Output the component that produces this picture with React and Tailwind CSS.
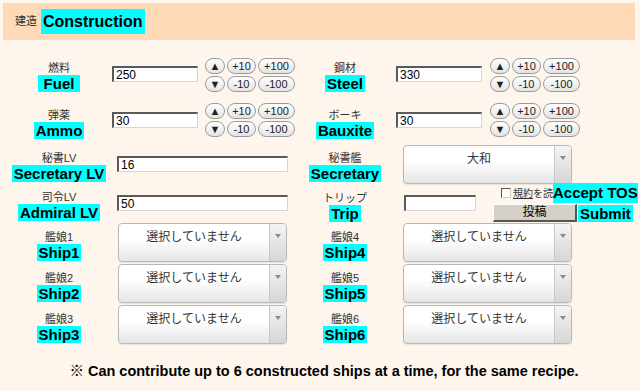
import React from 'react';

function Label({jp, en, cls, enCls}){
  return (
    <div className={"flex flex-col items-center shrink-0 " + cls}>
      <span className="text-[11px] leading-[14px] text-[#333]">{jp}</span>
      <span className={"bg-[#00ffff] text-[15px] leading-[17px] font-bold text-black " + (enCls || "px-[2px]")}>{en}</span>
    </div>
  );
}

function Steps({cls}){
  const b = "h-[16px] rounded-full border border-[#9a9a9a] bg-linear-to-b from-white to-[#e4e4e4] text-[11px] leading-[14px] text-[#222] flex items-center justify-center";
  return (
    <div className={"flex flex-col gap-[2px] mt-[1px] shrink-0 " + cls}>
      <div className="flex gap-[2px]">
        <span className={b + " w-[20px] text-[9px]"}>▲</span>
        <span className={b + " w-[29px]"}>+10</span>
        <span className={b + " w-[37px]"}>+100</span>
      </div>
      <div className="flex gap-[2px]">
        <span className={b + " w-[20px] text-[9px]"}>▼</span>
        <span className={b + " w-[29px]"}>-10</span>
        <span className={b + " w-[37px]"}>-100</span>
      </div>
    </div>
  );
}

function Field({value, cls}){
  return (
    <input readOnly defaultValue={value}
      className={"h-[16px] shrink-0 bg-white text-[12px] leading-[12px] pl-[2px] text-black outline-none border-t-2 border-l-2 border-b border-r border-t-[#5a5a5a] border-l-[#5a5a5a] border-b-[#d6d6d6] border-r-[#d6d6d6] " + cls} />
  );
}

function Sel({text, cls}){
  return (
    <div className={"w-[169px] h-[39px] shrink-0 flex rounded-[4px] border border-[#b8b8b8] bg-linear-to-b from-white from-40% to-[#e6e6e6] overflow-hidden shadow-[0_1px_1px_rgba(0,0,0,0.08)] " + cls}>
      <div className="flex-1 text-center pt-[6px] text-[12px] leading-[14px] text-[#333]">{text}</div>
      <div className="w-[17px] border-l border-[#c8c8c8] bg-linear-to-b from-[#f4f4f4] to-[#d6d6d6] flex justify-center pt-[10px]">
        <svg width="6" height="4" viewBox="0 0 6 4"><path d="M0 0h6L3 4z" fill="#8a8a8a" /></svg>
      </div>
    </div>
  );
}

export default function App(){
  const ships = [["艦娘1","Ship1","艦娘4","Ship4"],["艦娘2","Ship2","艦娘5","Ship5"],["艦娘3","Ship3","艦娘6","Ship6"]];
  return (
    <div className="w-[640px] h-[391px] bg-[#fef5ec] font-['Liberation_Sans','Noto_Sans_CJK_JP',sans-serif] overflow-hidden pt-[3px]">
      <div className="ml-[3px] mr-[5px] h-[37px] bg-[#fedab8] flex items-center pl-[12px]">
        <span className="text-[11px] text-[#333]">建造</span>
        <span className="ml-[4px] bg-[#00ffff] px-[2px] h-[25px] flex items-center text-[16px] font-bold text-black">Construction</span>
      </div>

      <div className="pl-[8px] mt-[17px]">
        <div className="flex items-start h-[45px]">
          <Label jp="燃料" en="Fuel" cls="w-[102px] mt-[4px]" enCls="px-[6px]" />
          <Field value="250" cls="ml-[2px] w-[86px] mt-[9px]" />
          <Steps cls="ml-[7px]" />
          <Label jp="鋼材" en="Steel" cls="w-[100px] mt-[4px]" />
          <Field value="330" cls="ml-[1px] w-[86px] mt-[9px]" />
          <Steps cls="ml-[8px]" />
        </div>
        <div className="flex items-start h-[43px]">
          <Label jp="弾薬" en="Ammo" cls="w-[102px] mt-[6px]" />
          <Field value="30" cls="ml-[2px] w-[86px] mt-[10px]" />
          <Steps cls="ml-[7px]" />
          <Label jp="ボーキ" en="Bauxite" cls="w-[100px] mt-[6px]" />
          <Field value="30" cls="ml-[1px] w-[86px] mt-[10px]" />
          <Steps cls="ml-[8px]" />
        </div>
        <div className="flex items-start h-[40px]">
          <Label jp="秘書LV" en="Secretary LV" cls="w-[102px] mt-[6px]" />
          <Field value="16" cls="ml-[7px] w-[171px] mt-[11px]" />
          <Label jp="秘書艦" en="Secretary" cls="w-[100px] ml-[7px] mt-[6px]" />
          <Sel text="大和" cls="ml-[8px]" />
        </div>
        <div className="flex items-start h-[38px]">
          <Label jp="司令LV" en="Admiral LV" cls="w-[102px] mt-[5px]" />
          <Field value="50" cls="ml-[7px] w-[171px] mt-[10px]" />
          <Label jp="トリップ" en="Trip" cls="w-[100px] ml-[7px] mt-[6px]" />
          <Field value="" cls="ml-[9px] w-[72px] mt-[10px]" />
          <div className="ml-[17px] -mt-[2px] flex flex-col shrink-0">
            <div className="flex items-center h-[20px]">
              <span className="ml-[8px] w-[10px] h-[10px] bg-white border border-t-[#555] border-l-[#555] border-b-[#ccc] border-r-[#ccc]"></span>
              <span className="ml-[2px] text-[10px] text-[#333] whitespace-nowrap"><span className="underline">規約</span>を読</span>
              <span className="bg-[#00ffff] text-[15px] leading-[20px] font-bold text-black whitespace-nowrap">Accept TOS</span>
            </div>
            <div className="flex items-center">
              <span className="w-[84px] h-[18px] bg-[#d4d0c8] border-t border-l border-t-white border-l-white border-b-2 border-r-2 border-b-[#555] border-r-[#555] flex items-center justify-center text-[12px] text-black">投稿</span>
              <span className="ml-[1px] mt-[2px] bg-[#00ffff] px-[2px] text-[15px] leading-[17px] font-bold text-black">Submit</span>
            </div>
          </div>
        </div>
        {ships.map(s => (
          <div key={s[1]} className="flex items-start h-[41px]">
            <Label jp={s[0]} en={s[1]} cls="w-[102px] mt-[7px]" />
            <Sel text="選択していません" cls="ml-[8px]" />
            <Label jp={s[2]} en={s[3]} cls="w-[100px] ml-[8px] mt-[7px]" />
            <Sel text="選択していません" cls="ml-[8px]" />
          </div>
        ))}
        <div className="mt-[15px] text-center text-[14.5px] leading-[20px] font-bold text-black">※ Can contribute up to 6 constructed ships at a time, for the same recipe.</div>
      </div>
    </div>
  );
}
